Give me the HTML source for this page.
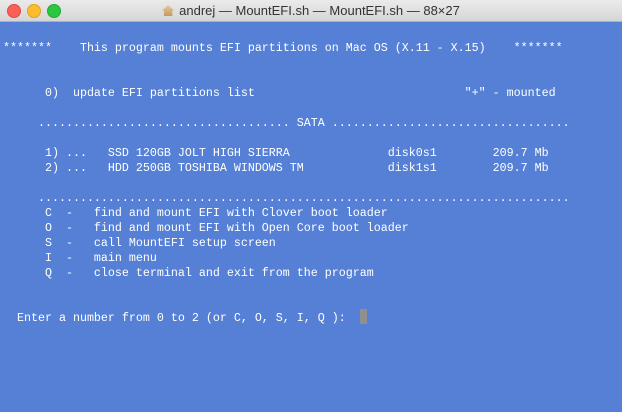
<!DOCTYPE html>
<html><head><meta charset="utf-8"><style>
html,body{margin:0;padding:0;width:622px;height:412px;overflow:hidden;background:#5580d6}
.tb{position:absolute;left:0;top:0;width:622px;height:21px;background:linear-gradient(#ebebeb,#d5d5d5);border-bottom:1px solid #b0b0b0}
.dot{position:absolute;top:4px;width:12px;height:12px;border-radius:50%}
.t{position:absolute;left:0;width:622px;top:3px;text-align:center;font:13px "Liberation Sans",sans-serif;color:#333}
pre{position:absolute;left:3px;top:41px;margin:0;font-family:"Liberation Mono",monospace;font-size:11.67px;line-height:15px;color:#fff}
.cur{position:absolute;left:360px;top:309px;width:7px;height:15px;background:#8f8f8f}
</style></head><body>
<div class="tb">
<div class="dot" style="left:7px;background:#fc5f57;border:0.5px solid #de4a42"></div>
<div class="dot" style="left:27px;background:#fdbc2e;border:0.5px solid #dea123"></div>
<div class="dot" style="left:47px;background:#29c840;border:0.5px solid #1eab2f"></div>
<div class="t"><span style="display:inline-block;width:12px;height:11px;position:relative;top:1px;margin-right:5px;background:linear-gradient(#e8c99a,#c49a60);clip-path:polygon(50% 0,100% 50%,85% 50%,85% 100%,15% 100%,15% 50%,0 50%)"></span>andrej — MountEFI.sh — MountEFI.sh — 88×27</div>
</div>
<pre>*******    This program mounts EFI partitions on Mac OS (X.11 - X.15)    *******


      0)  update EFI partitions list                              "+" - mounted

     .................................... SATA ..................................

      1) ...   SSD 120GB JOLT HIGH SIERRA              disk0s1        209.7 Mb
      2) ...   HDD 250GB TOSHIBA WINDOWS TM            disk1s1        209.7 Mb

     ............................................................................
      C  -   find and mount EFI with Clover boot loader
      O  -   find and mount EFI with Open Core boot loader
      S  -   call MountEFI setup screen
      I  -   main menu
      Q  -   close terminal and exit from the program


  Enter a number from 0 to 2 (or C, O, S, I, Q ):</pre>
<div class="cur"></div>
</body></html>
